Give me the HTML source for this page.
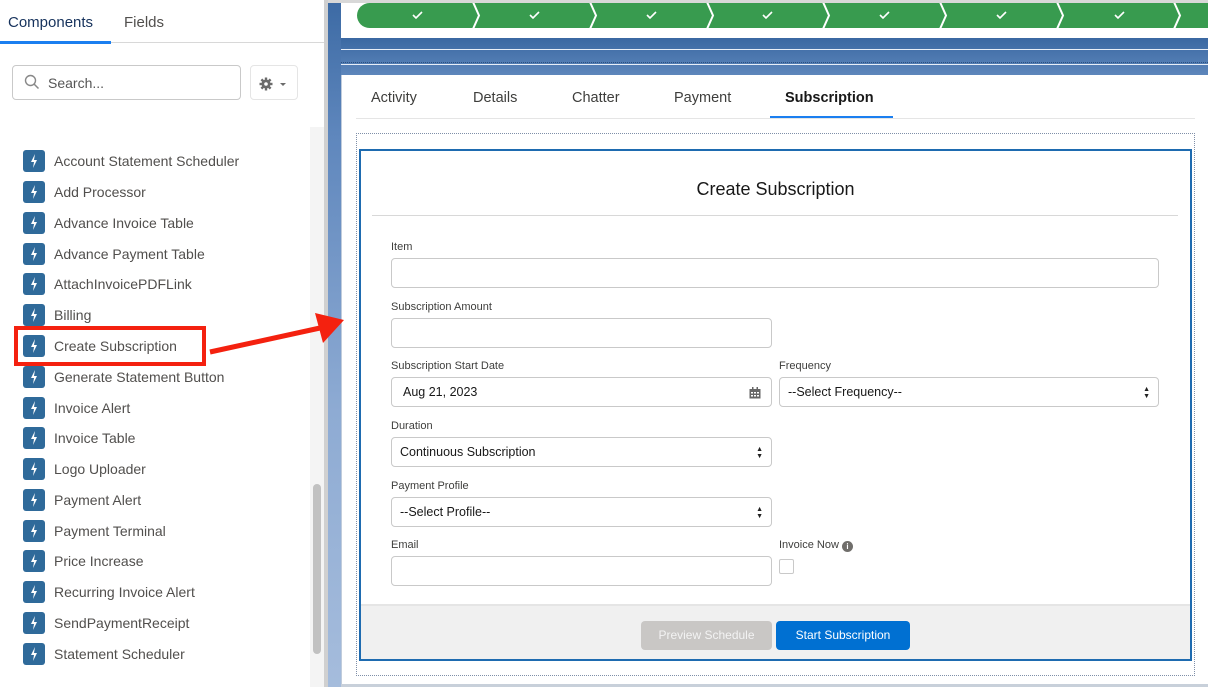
<!DOCTYPE html>
<html><head><meta charset="utf-8"><style>
*{box-sizing:border-box;margin:0;padding:0}
body{width:1208px;height:687px;overflow:hidden;font-family:"Liberation Sans",sans-serif;background:#fff;position:relative;color:#3e3e3c}
.abs{position:absolute}
.tabL{font-size:15px;top:14px}
.item{position:absolute;left:23px;height:22px;display:flex;align-items:center;font-size:14px;color:#514f4d}
.ic{width:22px;height:22px;background:#2f6a9a;border-radius:3px;margin-right:9px;display:flex;align-items:center;justify-content:center}
.lbl{position:absolute;font-size:11px;color:#3e3e3c}
.inp{position:absolute;height:30px;border:1px solid #c9c9c9;border-radius:4px;background:#fff;font-size:12.5px;color:#181818;padding-left:8px;display:flex;align-items:center}
.arr{position:absolute;right:8px;top:8px;font-size:7px;line-height:7px;color:#222}
</style></head><body>
<!-- left panel -->
<div class="abs tabL" style="left:8px;color:#16325c">Components</div>
<div class="abs tabL" style="left:124px;color:#514f4d">Fields</div>
<div class="abs" style="left:0;top:42px;width:324px;height:1px;background:#d8d8d8"></div>
<div class="abs" style="left:0;top:41px;width:111px;height:3px;background:#1b7ff0"></div>
<div class="abs" style="left:12px;top:65px;width:229px;height:35px;border:1px solid #c9c9c9;border-radius:4px"></div>
<svg class="abs" style="left:24px;top:74px" width="16" height="16" viewBox="0 0 16 16"><circle cx="6.5" cy="6.5" r="5" fill="none" stroke="#888" stroke-width="1.4"/><line x1="10" y1="10" x2="14.5" y2="14.5" stroke="#888" stroke-width="1.5"/></svg>
<div class="abs" style="left:48px;top:75px;font-size:14px;color:#555">Search...</div>
<div class="abs" style="left:250px;top:65px;width:48px;height:35px;border:1px solid #e5e5e5;border-radius:4px"></div>
<svg class="abs" style="left:259px;top:77px" width="30" height="14" viewBox="0 0 30 14"><circle cx="7" cy="7" r="4.5" fill="#6b6b6b"/><g stroke="#6b6b6b" stroke-width="2.4"><line x1="7" y1="0.5" x2="7" y2="13.5"/><line x1="0.5" y1="7" x2="13.5" y2="7"/><line x1="2.4" y1="2.4" x2="11.6" y2="11.6"/><line x1="11.6" y1="2.4" x2="2.4" y2="11.6"/></g><circle cx="7" cy="7" r="1.8" fill="#fff"/><path d="M21 6h6l-3 3z" fill="#6b6b6b"/></svg>
<div class="abs" style="left:310px;top:127px;width:14px;height:560px;background:#f4f4f4"></div>
<div class="abs" style="left:313px;top:484px;width:8px;height:170px;background:#c1c1c1;border-radius:4px"></div>
<div class="abs" style="left:324px;top:0;width:4px;height:687px;background:#d0d0d0"></div>
<div class="item" style="top:150px"><span class="ic"><svg width="8" height="14" viewBox="0 0 8 14"><path d="M5 0L1 8h3l-1 6 4-8H4z" fill="#fff"/></svg></span>Account Statement Scheduler</div>
<div class="item" style="top:181px"><span class="ic"><svg width="8" height="14" viewBox="0 0 8 14"><path d="M5 0L1 8h3l-1 6 4-8H4z" fill="#fff"/></svg></span>Add Processor</div>
<div class="item" style="top:212px"><span class="ic"><svg width="8" height="14" viewBox="0 0 8 14"><path d="M5 0L1 8h3l-1 6 4-8H4z" fill="#fff"/></svg></span>Advance Invoice Table</div>
<div class="item" style="top:243px"><span class="ic"><svg width="8" height="14" viewBox="0 0 8 14"><path d="M5 0L1 8h3l-1 6 4-8H4z" fill="#fff"/></svg></span>Advance Payment Table</div>
<div class="item" style="top:273px"><span class="ic"><svg width="8" height="14" viewBox="0 0 8 14"><path d="M5 0L1 8h3l-1 6 4-8H4z" fill="#fff"/></svg></span>AttachInvoicePDFLink</div>
<div class="item" style="top:304px"><span class="ic"><svg width="8" height="14" viewBox="0 0 8 14"><path d="M5 0L1 8h3l-1 6 4-8H4z" fill="#fff"/></svg></span>Billing</div>
<div class="item" style="top:335px"><span class="ic"><svg width="8" height="14" viewBox="0 0 8 14"><path d="M5 0L1 8h3l-1 6 4-8H4z" fill="#fff"/></svg></span>Create Subscription</div>
<div class="item" style="top:366px"><span class="ic"><svg width="8" height="14" viewBox="0 0 8 14"><path d="M5 0L1 8h3l-1 6 4-8H4z" fill="#fff"/></svg></span>Generate Statement Button</div>
<div class="item" style="top:397px"><span class="ic"><svg width="8" height="14" viewBox="0 0 8 14"><path d="M5 0L1 8h3l-1 6 4-8H4z" fill="#fff"/></svg></span>Invoice Alert</div>
<div class="item" style="top:427px"><span class="ic"><svg width="8" height="14" viewBox="0 0 8 14"><path d="M5 0L1 8h3l-1 6 4-8H4z" fill="#fff"/></svg></span>Invoice Table</div>
<div class="item" style="top:458px"><span class="ic"><svg width="8" height="14" viewBox="0 0 8 14"><path d="M5 0L1 8h3l-1 6 4-8H4z" fill="#fff"/></svg></span>Logo Uploader</div>
<div class="item" style="top:489px"><span class="ic"><svg width="8" height="14" viewBox="0 0 8 14"><path d="M5 0L1 8h3l-1 6 4-8H4z" fill="#fff"/></svg></span>Payment Alert</div>
<div class="item" style="top:520px"><span class="ic"><svg width="8" height="14" viewBox="0 0 8 14"><path d="M5 0L1 8h3l-1 6 4-8H4z" fill="#fff"/></svg></span>Payment Terminal</div>
<div class="item" style="top:550px"><span class="ic"><svg width="8" height="14" viewBox="0 0 8 14"><path d="M5 0L1 8h3l-1 6 4-8H4z" fill="#fff"/></svg></span>Price Increase</div>
<div class="item" style="top:581px"><span class="ic"><svg width="8" height="14" viewBox="0 0 8 14"><path d="M5 0L1 8h3l-1 6 4-8H4z" fill="#fff"/></svg></span>Recurring Invoice Alert</div>
<div class="item" style="top:612px"><span class="ic"><svg width="8" height="14" viewBox="0 0 8 14"><path d="M5 0L1 8h3l-1 6 4-8H4z" fill="#fff"/></svg></span>SendPaymentReceipt</div>
<div class="item" style="top:643px"><span class="ic"><svg width="8" height="14" viewBox="0 0 8 14"><path d="M5 0L1 8h3l-1 6 4-8H4z" fill="#fff"/></svg></span>Statement Scheduler</div>
<div class="abs" style="left:14px;top:326px;width:192px;height:40px;border:4px solid #f4210f"></div>
<!-- main -->
<div class="abs" style="left:328px;top:0;width:880px;height:687px;background:linear-gradient(180deg,#3c6aa4,#5f87bd 20%,#8eabd3 60%,#a5bcdc)"></div>
<div class="abs" style="left:328px;top:0;width:880px;height:3px;background:#d8d8d8"></div>
<div class="abs" style="left:341px;top:3px;width:867px;height:35px;background:#fff"></div>
<div class="abs" style="left:341px;top:38px;width:867px;height:37px;background:linear-gradient(180deg,#3a68a2,#5d86bb)"></div>
<div class="abs" style="left:341px;top:49px;width:867px;height:1px;background:#e8eef7"></div>
<div class="abs" style="left:341px;top:62px;width:867px;height:1px;border-top:1px dotted #2b4f80"></div>
<div class="abs" style="left:341px;top:64px;width:867px;height:1px;background:#e8eef7"></div>
<svg class="abs" style="left:357px;top:3px" width="851" height="25" viewBox="0 0 851 25">
<rect x="0" y="0" width="851" height="25" rx="12.5" fill="#389b4f"/><rect x="30" y="0" width="821" height="25" fill="#389b4f"/>
<g fill="none" stroke="#fff" stroke-width="2">
<path d="M116 -1l6 13.5-6 13.5"/><path d="M233 -1l6 13.5-6 13.5"/><path d="M350 -1l6 13.5-6 13.5"/><path d="M466 -1l6 13.5-6 13.5"/><path d="M583 -1l6 13.5-6 13.5"/><path d="M700 -1l6 13.5-6 13.5"/><path d="M817 -1l6 13.5-6 13.5"/></g>
<g fill="none" stroke="#fff" stroke-width="1.6">
<path d="M56 12l3 3 6-6"/><path d="M173 12l3 3 6-6"/><path d="M290 12l3 3 6-6"/><path d="M406 12l3 3 6-6"/><path d="M523 12l3 3 6-6"/><path d="M640 12l3 3 6-6"/><path d="M758 12l3 3 6-6"/></g></svg>
<div class="abs" style="left:341px;top:75px;width:867px;height:612px;background:#fff;border-left:1px solid #c0ccdc"></div>
<div class="abs" style="left:341px;top:684px;width:867px;height:3px;background:#c8d0da"></div>
<div class="abs" style="top:90px;left:371px;font-size:14.5px;color:#3e3e3c">Activity</div>
<div class="abs" style="top:90px;left:473px;font-size:14.5px;color:#3e3e3c">Details</div>
<div class="abs" style="top:90px;left:572px;font-size:14.5px;color:#3e3e3c">Chatter</div>
<div class="abs" style="top:90px;left:674px;font-size:14.5px;color:#3e3e3c">Payment</div>
<div class="abs" style="top:90px;left:785px;font-size:14.5px;font-weight:bold;color:#181818">Subscription</div>
<div class="abs" style="left:356px;top:118px;width:839px;height:1px;background:#e5e5e5"></div>
<div class="abs" style="left:770px;top:116px;width:123px;height:2px;background:#1b7ff0"></div>
<div class="abs" style="left:356px;top:133px;width:839px;height:543px;border:1px dotted #7f8fa8"></div>
<div class="abs" style="left:359px;top:149px;width:833px;height:512px;border:2px solid #1e6bb0;background:#fff"></div>
<div class="abs" style="left:361px;top:604px;width:829px;height:55px;background:#f0f0f0;border-top:2px solid #e5e5e5"></div>
<div class="abs" style="left:359px;top:179px;width:833px;text-align:center;font-size:18px;color:#181818">Create Subscription</div>
<div class="abs" style="left:372px;top:215px;width:806px;height:1px;background:#d8d8d8"></div>
<div class="lbl" style="left:391px;top:241px">Item</div>
<div class="inp" style="left:391px;top:258px;width:768px"></div>
<div class="lbl" style="left:391px;top:301px">Subscription Amount</div>
<div class="inp" style="left:391px;top:318px;width:381px"></div>
<div class="lbl" style="left:391px;top:360px">Subscription Start Date</div>
<div class="inp" style="left:391px;top:377px;width:381px;padding-left:11px">Aug 21, 2023<svg style="position:absolute;right:10px;top:9px" width="12" height="12" viewBox="0 0 12 12"><rect x="0.5" y="2" width="11" height="9.5" fill="#666"/><rect x="3" y="0" width="1.5" height="3" fill="#666"/><rect x="7.5" y="0" width="1.5" height="3" fill="#666"/><g fill="#fff"><rect x="2" y="5" width="2" height="1.5"/><rect x="5" y="5" width="2" height="1.5"/><rect x="8" y="5" width="2" height="1.5"/><rect x="2" y="8" width="2" height="1.5"/><rect x="5" y="8" width="2" height="1.5"/><rect x="8" y="8" width="2" height="1.5"/></g></svg></div>
<div class="lbl" style="left:779px;top:360px">Frequency</div>
<div class="inp" style="left:779px;top:377px;width:380px">--Select Frequency--<div class="arr">▲<br>▼</div></div>
<div class="lbl" style="left:391px;top:420px">Duration</div>
<div class="inp" style="left:391px;top:437px;width:381px">Continuous Subscription<div class="arr">▲<br>▼</div></div>
<div class="lbl" style="left:391px;top:480px">Payment Profile</div>
<div class="inp" style="left:391px;top:497px;width:381px">--Select Profile--<div class="arr">▲<br>▼</div></div>
<div class="lbl" style="left:391px;top:539px">Email</div>
<div class="inp" style="left:391px;top:556px;width:381px"></div>
<div class="lbl" style="left:779px;top:539px">Invoice Now <span style="display:inline-block;width:11px;height:11px;border-radius:50%;background:#706e6b;color:#fff;font-size:8px;text-align:center;line-height:11px;font-weight:bold;vertical-align:-1px">i</span></div>
<div class="abs" style="left:779px;top:559px;width:15px;height:15px;border:1px solid #c9c9c9;border-radius:2px"></div>
<div class="abs" style="left:641px;top:621px;width:131px;height:29px;background:#c9c7c5;border-radius:4px;color:#f3f3f3;font-size:12px;text-align:center;line-height:29px">Preview Schedule</div>
<div class="abs" style="left:776px;top:621px;width:134px;height:29px;background:#0070d2;border-radius:4px;color:#fff;font-size:12px;text-align:center;line-height:29px">Start Subscription</div>
<!-- arrow -->
<svg class="abs" style="left:205px;top:305px" width="145" height="55" viewBox="0 0 145 55"><line x1="5" y1="47" x2="115" y2="23" stroke="#f4210f" stroke-width="5"/><path d="M139 15L110 8l8 30z" fill="#f4210f"/></svg>
</body></html>
